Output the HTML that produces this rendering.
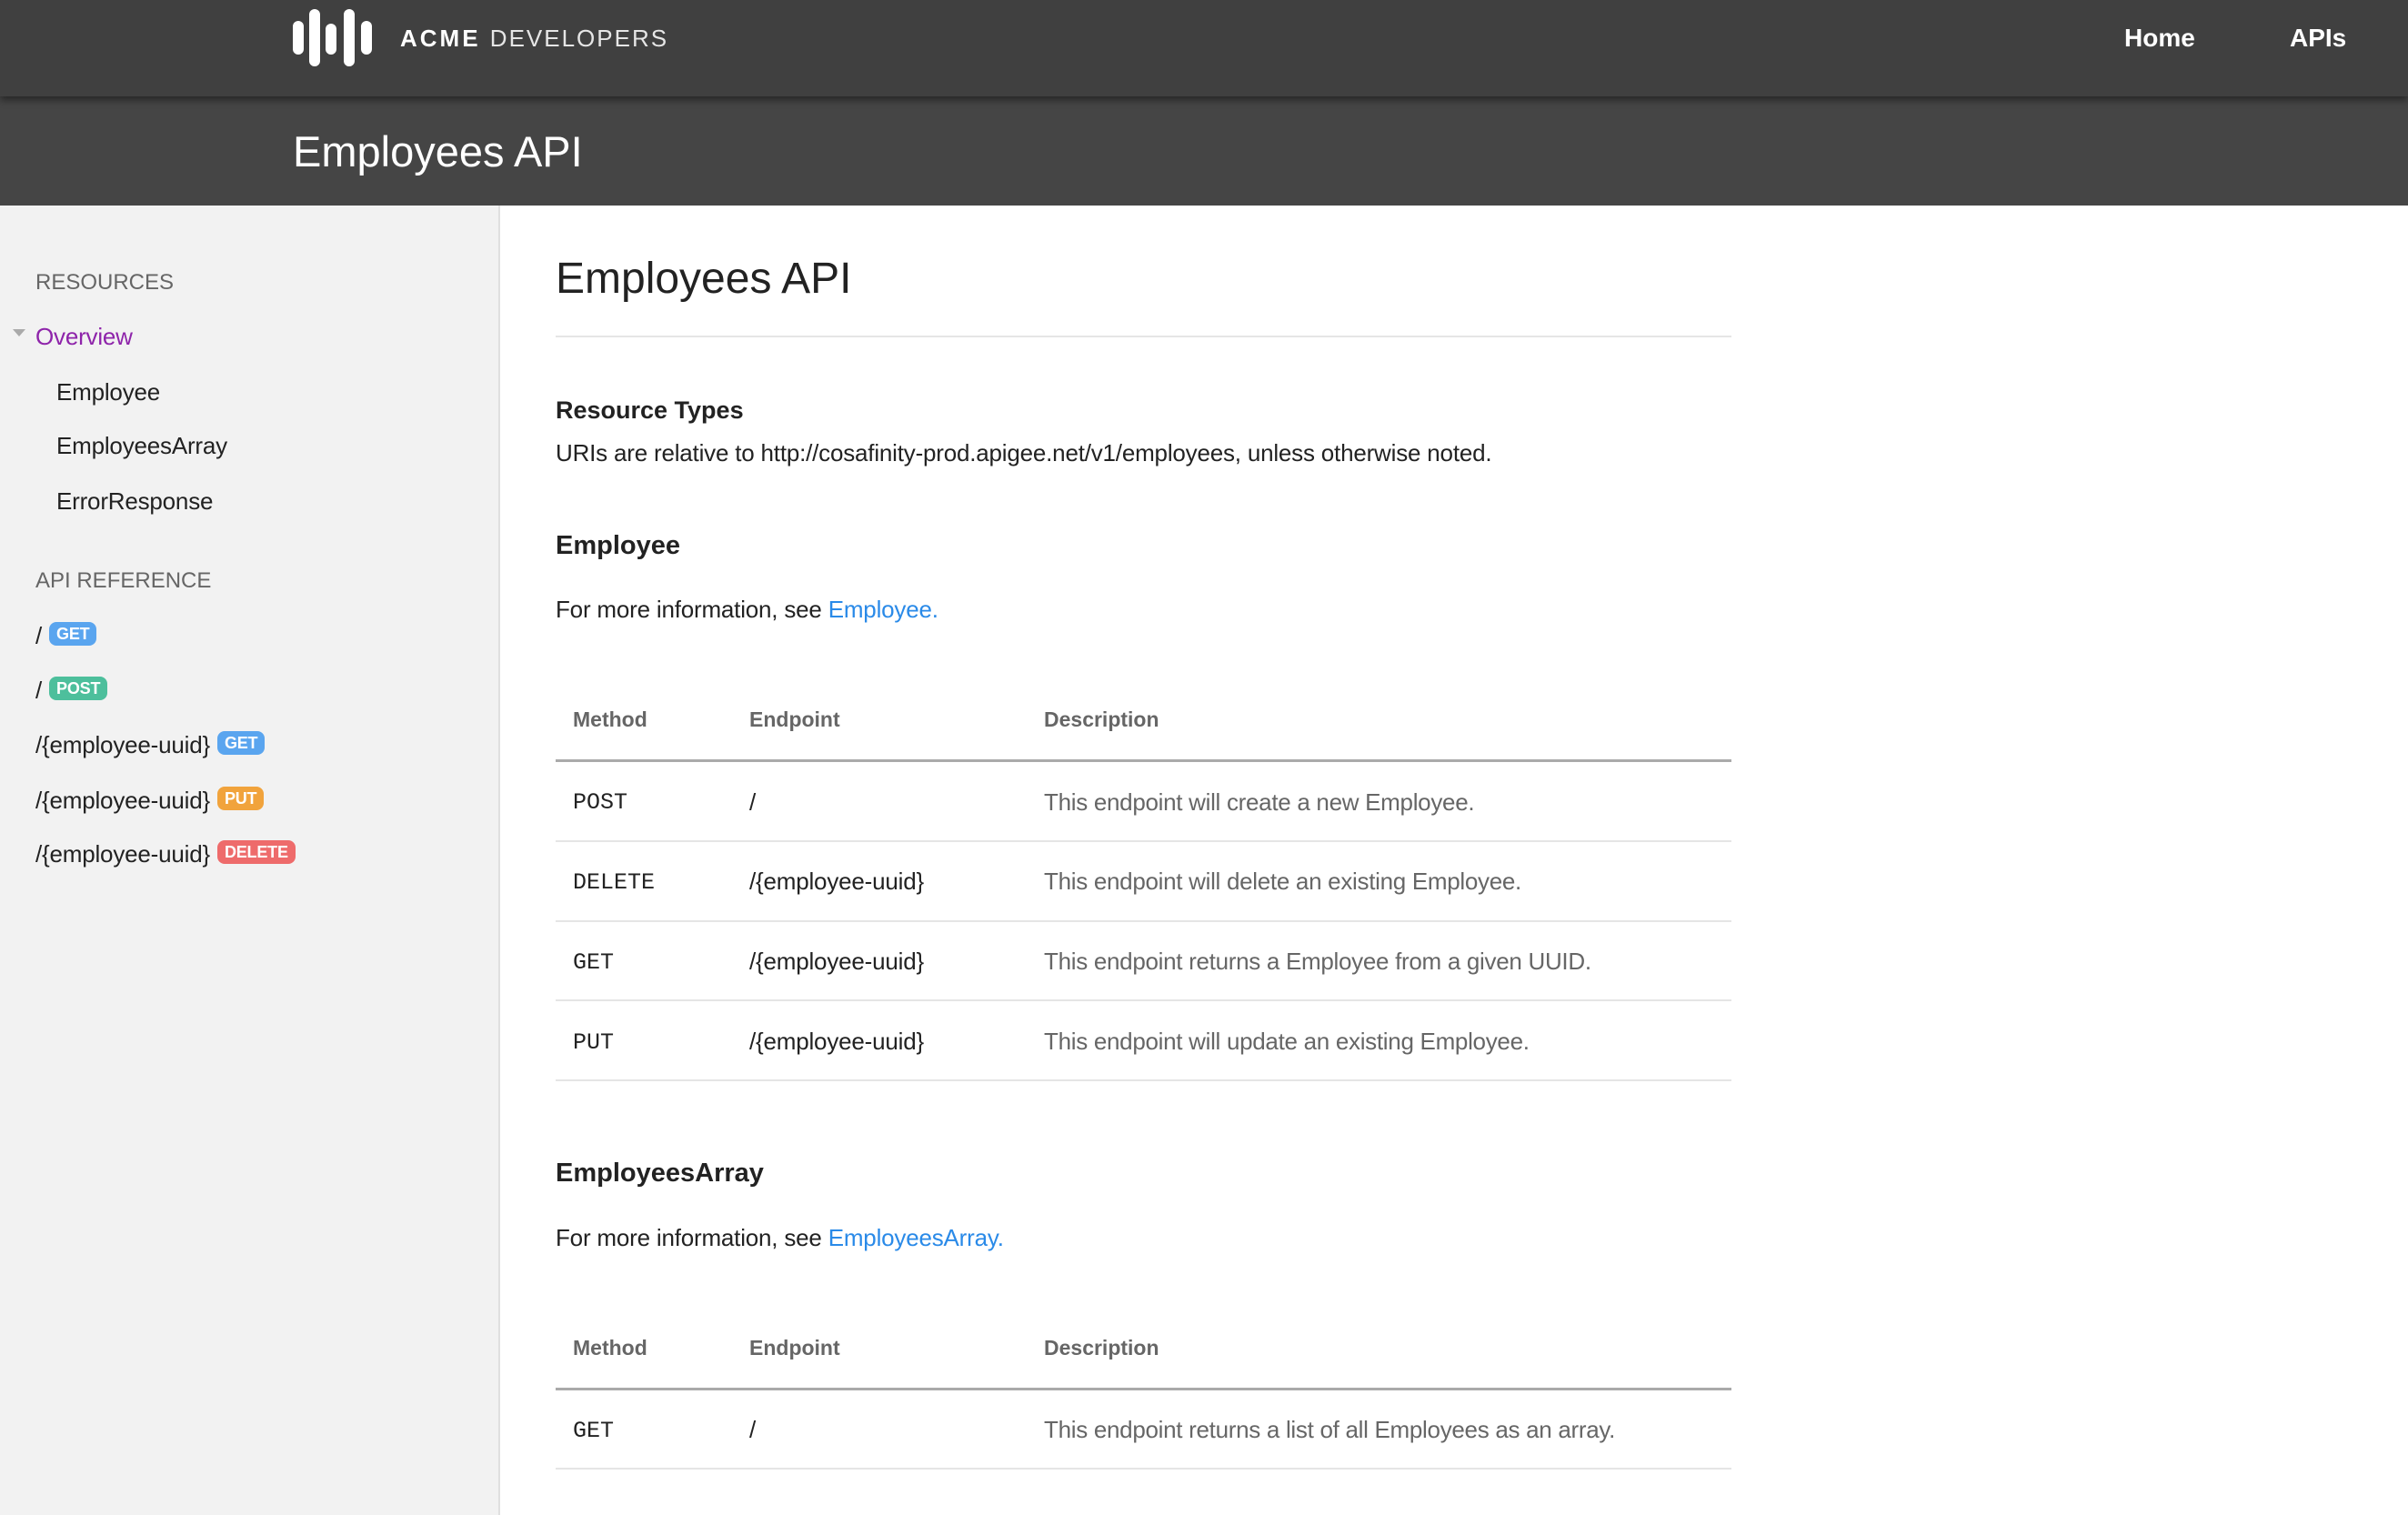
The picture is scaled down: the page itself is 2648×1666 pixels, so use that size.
<!DOCTYPE html>
<html><head><meta charset="utf-8"><style>
*{margin:0;padding:0;box-sizing:border-box}
body{width:2648px;height:1666px;overflow:hidden;background:#fff;font-family:"Liberation Sans",sans-serif;color:#222;position:relative}
.a{position:absolute;white-space:nowrap;line-height:1}
.top{position:absolute;left:0;top:0;width:2648px;height:106px;background:#404040;box-shadow:0 4px 8px rgba(0,0,0,.45);z-index:2}
.band{position:absolute;left:0;top:106px;width:2648px;height:120px;background:#454545}
.side{position:absolute;left:0;top:226px;width:550px;height:1440px;background:#f2f2f2;border-right:2px solid #e0e0e0}
.bar{position:absolute;background:#fff;border-radius:6px;width:12px}
.badge{display:inline-block;color:#fff;font-weight:bold;font-size:18px;padding:4px 8px;border-radius:8px;vertical-align:5px;margin-left:8px;line-height:1}
.s{font-size:26px;color:#222;letter-spacing:-0.2px}
.h{font-size:24px;color:#666}
.th{font-size:23px;color:#666;font-weight:bold}
.m{font-family:"Liberation Mono",monospace;font-size:25px;color:#222}
.e{font-size:26px;color:#222;letter-spacing:-0.2px}
.d{font-size:26px;color:#666;letter-spacing:-0.3px}
.ln{position:absolute;left:611px;width:1293px;height:2px;background:#e5e5e5}
a{color:#2a8ae8;text-decoration:none}
</style></head><body>
<div class="top">
 <div class="bar" style="left:322px;top:23px;height:37px"></div>
 <div class="bar" style="left:340px;top:10px;height:63px"></div>
 <div class="bar" style="left:358px;top:26px;height:34px"></div>
 <div class="bar" style="left:378px;top:10px;height:63px"></div>
 <div class="bar" style="left:397px;top:23px;height:37px"></div>
 <div class="a" style="left:440px;top:29px;font-size:26px;color:#fff;letter-spacing:3px"><b>ACME</b> <span style="color:#e6e6e6;letter-spacing:2px">DEVELOPERS</span></div>
 <div class="a" style="left:2336px;top:28px;font-size:28px;color:#fff;font-weight:bold">Home</div>
 <div class="a" style="left:2518px;top:28px;font-size:28px;color:#fff;font-weight:bold">APIs</div>
</div>
<div class="band"><div class="a" style="left:322px;top:37px;font-size:47px;color:#fff">Employees API</div></div>
<div class="side"></div>
<div class="a h" style="left:39px;top:299px">RESOURCES</div>
<div class="a" style="left:14px;top:362px;width:0;height:0;border-left:7px solid transparent;border-right:7px solid transparent;border-top:8px solid #aaa"></div>
<div class="a s" style="left:39px;top:357px;color:#8e24aa">Overview</div>
<div class="a s" style="left:62px;top:418px">Employee</div>
<div class="a s" style="left:62px;top:477px">EmployeesArray</div>
<div class="a s" style="left:62px;top:538px">ErrorResponse</div>
<div class="a h" style="left:39px;top:627px">API REFERENCE</div>
<div class="a s" style="left:39px;top:684px">/<span class="badge" style="background:#5aa5ef">GET</span></div>
<div class="a s" style="left:39px;top:744px">/<span class="badge" style="background:#4dbf9c">POST</span></div>
<div class="a s" style="left:39px;top:804px">/{employee-uuid}<span class="badge" style="background:#5aa5ef">GET</span></div>
<div class="a s" style="left:39px;top:865px">/{employee-uuid}<span class="badge" style="background:#f1a33c">PUT</span></div>
<div class="a s" style="left:39px;top:924px">/{employee-uuid}<span class="badge" style="background:#ee6b6b">DELETE</span></div>

<div class="a" style="left:611px;top:283px;font-size:48px;color:#222">Employees API</div>
<div class="ln" style="top:369px"></div>
<div class="a" style="left:611px;top:438px;font-size:27px;font-weight:bold">Resource Types</div>
<div class="a e" style="left:611px;top:485px">URIs are relative to http://cosafinity-prod.apigee.net/v1/employees, unless otherwise noted.</div>
<div class="a" style="left:611px;top:586px;font-size:29px;font-weight:bold">Employee</div>
<div class="a e" style="left:611px;top:657px">For more information, see <a>Employee.</a></div>
<div class="a th" style="left:630px;top:780px">Method</div>
<div class="a th" style="left:824px;top:780px">Endpoint</div>
<div class="a th" style="left:1148px;top:780px">Description</div>
<div class="ln" style="top:835px;background:#aaa;height:3px"></div>
<div class="a m" style="left:630px;top:870px">POST</div><div class="a e" style="left:824px;top:869px">/</div><div class="a d" style="left:1148px;top:869px">This endpoint will create a new Employee.</div>
<div class="ln" style="top:924px"></div>
<div class="a m" style="left:630px;top:958px">DELETE</div><div class="a e" style="left:824px;top:956px">/{employee-uuid}</div><div class="a d" style="left:1148px;top:956px">This endpoint will delete an existing Employee.</div>
<div class="ln" style="top:1012px"></div>
<div class="a m" style="left:630px;top:1046px">GET</div><div class="a e" style="left:824px;top:1044px">/{employee-uuid}</div><div class="a d" style="left:1148px;top:1044px">This endpoint returns a Employee from a given UUID.</div>
<div class="ln" style="top:1099px"></div>
<div class="a m" style="left:630px;top:1134px">PUT</div><div class="a e" style="left:824px;top:1132px">/{employee-uuid}</div><div class="a d" style="left:1148px;top:1132px">This endpoint will update an existing Employee.</div>
<div class="ln" style="top:1187px"></div>
<div class="a" style="left:611px;top:1276px;font-size:29px;font-weight:bold">EmployeesArray</div>
<div class="a e" style="left:611px;top:1348px">For more information, see <a>EmployeesArray.</a></div>
<div class="a th" style="left:630px;top:1471px">Method</div>
<div class="a th" style="left:824px;top:1471px">Endpoint</div>
<div class="a th" style="left:1148px;top:1471px">Description</div>
<div class="ln" style="top:1526px;background:#aaa;height:3px"></div>
<div class="a m" style="left:630px;top:1561px">GET</div><div class="a e" style="left:824px;top:1559px">/</div><div class="a d" style="left:1148px;top:1559px">This endpoint returns a list of all Employees as an array.</div>
<div class="ln" style="top:1614px"></div>
</body></html>
